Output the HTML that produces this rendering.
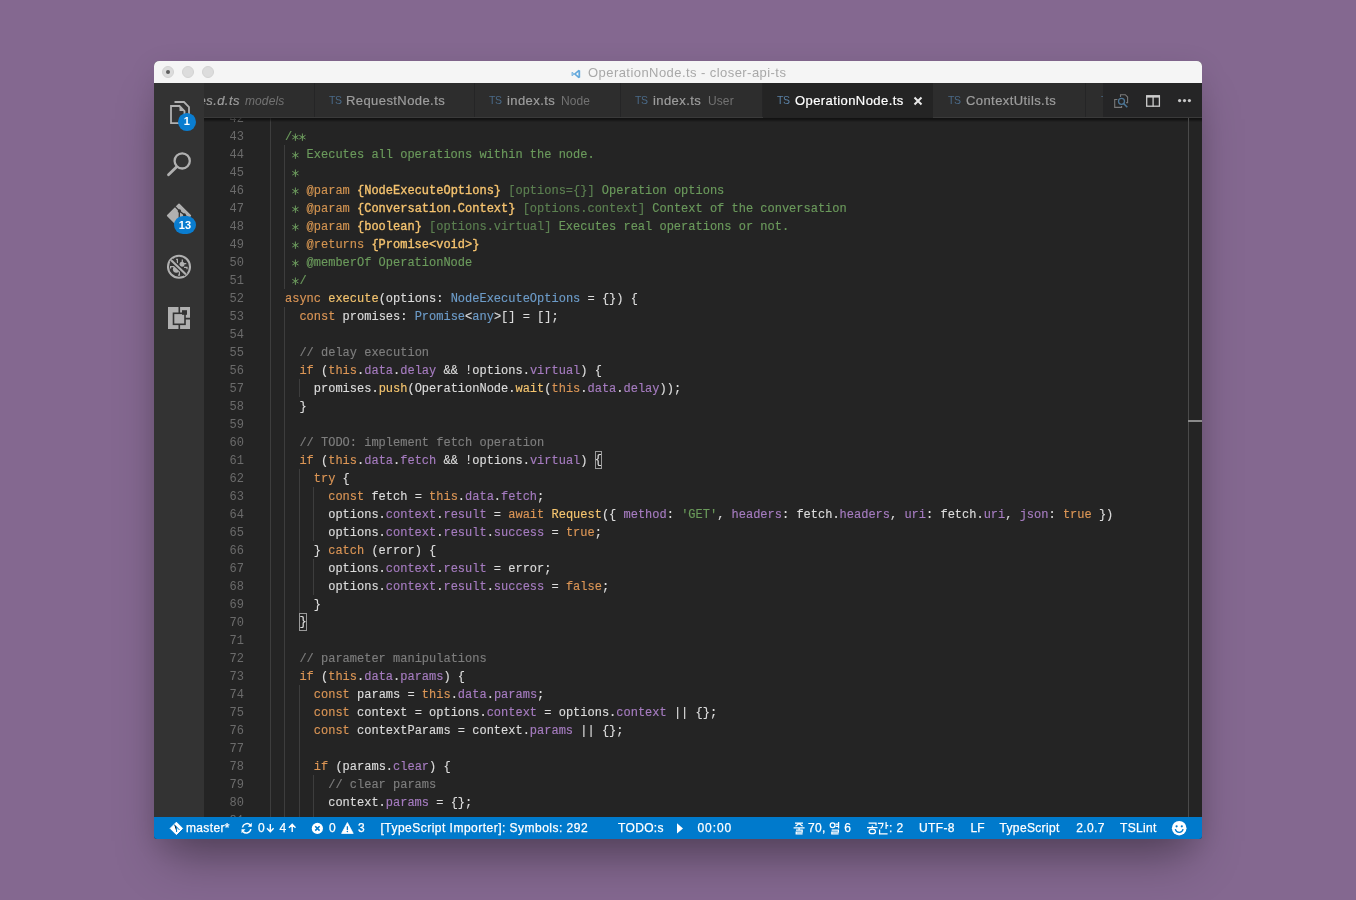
<!DOCTYPE html>
<html><head><meta charset="utf-8">
<style>
*{margin:0;padding:0;box-sizing:border-box}
html,body{width:1356px;height:900px;overflow:hidden;-webkit-font-smoothing:antialiased;background:#846890;font-family:"Liberation Sans",sans-serif}
#win{will-change:transform;position:absolute;left:154px;top:61px;width:1048px;height:778px;border-radius:5px 5px 3px 3px;overflow:hidden;background:#242424;box-shadow:0 30px 45px -12px rgba(0,0,0,0.34),0 8px 30px rgba(0,0,0,0.1)}
#title{position:absolute;left:0;top:0;width:1048px;height:22px;background:#f5f5f5}
.tl{position:absolute;top:5px;width:12px;height:12px;border-radius:50%;background:#dcdcdc;border:0.5px solid #d2d2d2}
#ttext{position:absolute;left:434px;top:4px;font-size:13px;line-height:15px;letter-spacing:0.44px;color:#a8a8a8;white-space:nowrap}
#act{position:absolute;left:0;top:22px;width:50px;height:734px;background:#333333}
#act svg{position:absolute;left:0;top:0}
#tabs{position:absolute;left:50px;top:22px;width:998px;height:35px;background:#252526}
#tabs .bb{position:absolute;left:0;top:34px;width:998px;height:1px;background:#3a3a3a}
.tab{position:absolute;top:0;height:35px;background:#2d2d2d;font-size:13px;line-height:15px;color:#9d9d9d;white-space:nowrap;overflow:hidden}
.tab .sep{position:absolute;right:0;top:0;width:1px;height:35px;background:#252526}
.tab .ts{position:absolute;top:12px;font-size:10.5px;line-height:11px;color:#4a6a88;letter-spacing:-0.4px}
.tab .nm{position:absolute;top:10px;letter-spacing:0.42px;-webkit-text-stroke:0.2px currentColor}
.tab .ds{position:absolute;top:11px;font-size:12px;line-height:14px;color:#737373;letter-spacing:0.1px}
#editor{position:absolute;left:50px;top:57px;width:998px;height:699px;background:#242424;overflow:hidden}
#gutter{position:absolute;left:0;top:0;width:66px;height:699px}
.ln{position:absolute;left:0;width:40px;text-align:right;font-family:"Liberation Mono",monospace;font-size:12px;color:#6b6b6b;line-height:18px;height:18px}
#code{position:absolute;left:66.6px;top:0;width:930px;height:699px}
.l{position:absolute;left:0;height:18px;line-height:18px;font-family:"Liberation Mono",monospace;font-size:12px;color:#dcdcdc;white-space:pre;-webkit-text-stroke:0.15px currentColor}
.g{position:absolute;width:1px;background:#3d3d3d}
#status{position:absolute;left:0;top:756px;width:1048px;height:22px;background:#007acc;color:#fff;font-size:12px;line-height:14px;white-space:nowrap;letter-spacing:0.35px;-webkit-text-stroke:0.25px #fff}
#status span{position:absolute;top:4px}
#status svg{position:absolute;left:0;top:0}
/* syntax */
.k{color:#dc9656}.f{color:#f5c56f}.p{color:#a67cc0}.t{color:#6d9cc9}.c{color:#7e7e7e}.d{color:#6b9a5c}.s{color:#6a9a5a}.tg{color:#d39451}.ty{color:#f5c36f;-webkit-text-stroke:0.35px #f5c36f}.dp{color:#5c8051}
.ast{vertical-align:top;display:inline-block}
.bm{display:inline-block;vertical-align:top;width:7.2px;height:18px;position:relative;top:-1px;box-shadow:inset 0 0 0 1px #9a9a9a}
</style></head><body>
<div id="win">
  <div id="title">
    <div class="tl" style="left:8px"></div>
    <div class="tl" style="left:28px"></div>
    <div class="tl" style="left:48px"></div>
    <div style="position:absolute;left:12px;top:9px;width:4px;height:4px;border-radius:50%;background:#5e5e5e"></div>
    <svg style="position:absolute;left:417px;top:8px" width="10" height="10" viewBox="0 0 10 10"><path d="M7.5,0.8 L9.2,1.6 V8.4 L7.5,9.2 L3.2,5.6 L1.3,7.1 L0.6,6.7 V3.3 L1.3,2.9 L3.2,4.4 Z M7.4,3.1 L5,5 L7.4,6.9 Z M1.6,4.1 V5.9 L2.6,5 Z" fill="#62a8dc" fill-rule="evenodd"/></svg>
    <div id="ttext">OperationNode.ts - closer-api-ts</div>
  </div>
  <div id="act">
    <svg width="50" height="734" viewBox="0 0 50 734">
      <g transform="translate(-154,-83)" fill="none" stroke="#b0b0b0">
        <!-- explorer -->
        <path d="M174.5,102 H184 L189,107 V119" stroke-width="1.8"/>
        <path d="M171,106 H179.5 L184.5,111 V123.2 H171 Z" stroke-width="1.8"/>
        <path d="M179.5,106 V111 H184.5 Z" fill="#b0b0b0" stroke-width="0"/>
        <!-- search -->
        <circle cx="182.2" cy="160.9" r="7.6" stroke-width="2.3"/>
        <path d="M168.5,174.8 L176.5,167" stroke-width="2.8" stroke-linecap="round"/>
        <!-- git -->
        <path d="M179,204.3 L190.3,215.6 L179,226.9 L167.7,215.6 Z" fill="#b0b0b0" stroke="#b0b0b0" stroke-width="1.6" stroke-linejoin="round"/>
        <path d="M175,206.4 L179.4,211 L184.6,215 L188,217.5 M179.4,211 L179.2,220" stroke="#333" stroke-width="1.3"/>
        <circle cx="179.4" cy="211" r="1.7" fill="#333" stroke="none"/>
        <circle cx="184.4" cy="214.8" r="1.5" fill="#333" stroke="none"/>
        <!-- debug -->
        <circle cx="179" cy="266.8" r="11" stroke="#b0b0b0" stroke-width="2.1"/>
        <g fill="#b0b0b0" stroke="none">
          <circle cx="176.3" cy="269.3" r="3.4"/>
          <circle cx="182" cy="264.2" r="2.5"/>
        </g>
        <path d="M170.6,268.6 V266.7 H174.5 M176.1,259.3 H177.4 V263.2 M182.3,259.6 V262 M183.6,263.6 H186.3 M184,267.3 H187 V269.2 M179.4,271 V275.2 H178" stroke="#b0b0b0" stroke-width="1.25"/>
        <path d="M171.2,260.2 L186,274.6" stroke="#333" stroke-width="4.4"/>
        <path d="M171.2,260.2 L186,274.6" stroke="#b0b0b0" stroke-width="2.1"/>
        <!-- extensions -->
        <rect x="168" y="307" width="22" height="22" fill="#b0b0b0" stroke="none"/>
        <path d="M179.3,307 V313 M179.3,324 V329 M185,318.6 H190" stroke="#333" stroke-width="1.6"/>
        <rect x="173.5" y="313.3" width="11.5" height="11" stroke="#333" stroke-width="1.6"/>
        <rect x="182" y="310.2" width="5" height="4.6" fill="#333" stroke="none"/>
      </g>
    </svg>
    <div style="position:absolute;left:24px;top:29.8px;width:17.8px;height:17.8px;border-radius:50%;background:#0a7dd0;color:#fff;font-size:11px;font-weight:bold;line-height:17.8px;text-align:center">1</div>
    <div style="position:absolute;left:20px;top:133px;width:22px;height:18px;border-radius:9px;background:#0a7dd0;color:#fff;font-size:11px;font-weight:bold;line-height:18px;text-align:center;letter-spacing:0.2px">13</div>
  </div>
  <div id="tabs">
    <div class="tab" style="left:0;width:111px"><div class="sep"></div>
      <div class="nm" style="left:-24px;font-style:italic;color:#9d9d9d">types.d.ts</div>
      <div class="ds" style="left:41px;font-style:italic">models</div>
    </div>
    <div class="tab" style="left:111px;width:160px"><div class="sep"></div>
      <div class="ts" style="left:14px">TS</div>
      <div class="nm" style="left:31px">RequestNode.ts</div>
    </div>
    <div class="tab" style="left:271px;width:146px"><div class="sep"></div>
      <div class="ts" style="left:14px">TS</div>
      <div class="nm" style="left:32px">index.ts</div>
      <div class="ds" style="left:86px">Node</div>
    </div>
    <div class="tab" style="left:417px;width:142px"><div class="sep"></div>
      <div class="ts" style="left:14px">TS</div>
      <div class="nm" style="left:32px">index.ts</div>
      <div class="ds" style="left:87px">User</div>
    </div>
    <div class="tab" style="left:559px;width:170px;background:#242424;color:#ffffff;height:35px">
      <div class="ts" style="left:14px;color:#5a80a5">TS</div>
      <div class="nm" style="left:32px">OperationNode.ts</div>
      <svg style="position:absolute;left:150px;top:13px" width="10" height="10" viewBox="0 0 10 10"><path d="M1.5,1.5 L8.5,8.5 M8.5,1.5 L1.5,8.5" stroke="#e8e8e8" stroke-width="2"/></svg>
    </div>
    <div class="tab" style="left:729px;width:153px"><div class="sep"></div>
      <div class="ts" style="left:15px">TS</div>
      <div class="nm" style="left:33px">ContextUtils.ts</div>
    </div>
    <div class="tab" style="left:882px;width:17px">
      <div class="ts" style="left:15px">TS</div>
    </div>
    <div class="bb" style="left:0;width:559px"></div>
    <div class="bb" style="left:729px;width:269px"></div>
    <svg style="position:absolute;left:899px;top:0" width="99" height="35" viewBox="1103 83 99 35">
      <path d="M1120.5,97 V94.7 H1125.3 L1127.6,97 V102.6 H1126.2 M1117.4,99.5 H1114.7 V107.4 H1121.6 V106" fill="none" stroke="#7a7a7a" stroke-width="1.1"/>
      <circle cx="1121.5" cy="101.3" r="3" fill="none" stroke="#4d7696" stroke-width="1.3"/>
      <path d="M1123.6,103.5 L1127.3,107.3" stroke="#4d7696" stroke-width="1.6"/>
      <rect x="1146.7" y="96" width="12.7" height="10.2" fill="none" stroke="#cccccc" stroke-width="1.3"/>
      <rect x="1146.1" y="95.2" width="13.9" height="2.4" fill="#cccccc"/>
      <path d="M1153.1,96 V106.5" stroke="#cccccc" stroke-width="1.3"/>
      <circle cx="1179.6" cy="100.6" r="1.6" fill="#c8c8c8"/>
      <circle cx="1184.5" cy="100.6" r="1.6" fill="#c8c8c8"/>
      <circle cx="1189.4" cy="100.6" r="1.6" fill="#c8c8c8"/>
    </svg>
  </div>
  <div id="editor">
    <div id="gutter"><div class="ln" style="top:-8px">42</div>
<div class="ln" style="top:10px">43</div>
<div class="ln" style="top:28px">44</div>
<div class="ln" style="top:46px">45</div>
<div class="ln" style="top:64px">46</div>
<div class="ln" style="top:82px">47</div>
<div class="ln" style="top:100px">48</div>
<div class="ln" style="top:118px">49</div>
<div class="ln" style="top:136px">50</div>
<div class="ln" style="top:154px">51</div>
<div class="ln" style="top:172px">52</div>
<div class="ln" style="top:190px">53</div>
<div class="ln" style="top:208px">54</div>
<div class="ln" style="top:226px">55</div>
<div class="ln" style="top:244px">56</div>
<div class="ln" style="top:262px">57</div>
<div class="ln" style="top:280px">58</div>
<div class="ln" style="top:298px">59</div>
<div class="ln" style="top:316px">60</div>
<div class="ln" style="top:334px">61</div>
<div class="ln" style="top:352px">62</div>
<div class="ln" style="top:370px">63</div>
<div class="ln" style="top:388px">64</div>
<div class="ln" style="top:406px">65</div>
<div class="ln" style="top:424px">66</div>
<div class="ln" style="top:442px">67</div>
<div class="ln" style="top:460px">68</div>
<div class="ln" style="top:478px">69</div>
<div class="ln" style="top:496px">70</div>
<div class="ln" style="top:514px">71</div>
<div class="ln" style="top:532px">72</div>
<div class="ln" style="top:550px">73</div>
<div class="ln" style="top:568px">74</div>
<div class="ln" style="top:586px">75</div>
<div class="ln" style="top:604px">76</div>
<div class="ln" style="top:622px">77</div>
<div class="ln" style="top:640px">78</div>
<div class="ln" style="top:658px">79</div>
<div class="ln" style="top:676px">80</div>
<div class="ln" style="top:694px">81</div></div>
    <div id="code"><div class="l" style="top:-8px"></div>
<div class="l" style="top:10px">  <span class="d">/<svg class="ast" width="7.2" height="18" viewBox="0 0 7.2 18"><path d="M3.4,5.5 V12.9 M0.3,7.35 L6.5,11.05 M0.3,11.05 L6.5,7.35" stroke="currentColor" stroke-width="1"/></svg><svg class="ast" width="7.2" height="18" viewBox="0 0 7.2 18"><path d="M3.4,5.5 V12.9 M0.3,7.35 L6.5,11.05 M0.3,11.05 L6.5,7.35" stroke="currentColor" stroke-width="1"/></svg></span></div>
<div class="l" style="top:28px">  <span class="d"> <svg class="ast" width="7.2" height="18" viewBox="0 0 7.2 18"><path d="M3.4,5.5 V12.9 M0.3,7.35 L6.5,11.05 M0.3,11.05 L6.5,7.35" stroke="currentColor" stroke-width="1"/></svg> Executes all operations within the node.</span></div>
<div class="l" style="top:46px">  <span class="d"> <svg class="ast" width="7.2" height="18" viewBox="0 0 7.2 18"><path d="M3.4,5.5 V12.9 M0.3,7.35 L6.5,11.05 M0.3,11.05 L6.5,7.35" stroke="currentColor" stroke-width="1"/></svg></span></div>
<div class="l" style="top:64px">  <span class="d"> <svg class="ast" width="7.2" height="18" viewBox="0 0 7.2 18"><path d="M3.4,5.5 V12.9 M0.3,7.35 L6.5,11.05 M0.3,11.05 L6.5,7.35" stroke="currentColor" stroke-width="1"/></svg> </span><span class="tg">@param</span><span class="d"> </span><span class="ty">{NodeExecuteOptions}</span><span class="d"> </span><span class="dp">[options={}]</span><span class="d"> Operation options</span></div>
<div class="l" style="top:82px">  <span class="d"> <svg class="ast" width="7.2" height="18" viewBox="0 0 7.2 18"><path d="M3.4,5.5 V12.9 M0.3,7.35 L6.5,11.05 M0.3,11.05 L6.5,7.35" stroke="currentColor" stroke-width="1"/></svg> </span><span class="tg">@param</span><span class="d"> </span><span class="ty">{Conversation.Context}</span><span class="d"> </span><span class="dp">[options.context]</span><span class="d"> Context of the conversation</span></div>
<div class="l" style="top:100px">  <span class="d"> <svg class="ast" width="7.2" height="18" viewBox="0 0 7.2 18"><path d="M3.4,5.5 V12.9 M0.3,7.35 L6.5,11.05 M0.3,11.05 L6.5,7.35" stroke="currentColor" stroke-width="1"/></svg> </span><span class="tg">@param</span><span class="d"> </span><span class="ty">{boolean}</span><span class="d"> </span><span class="dp">[options.virtual]</span><span class="d"> Executes real operations or not.</span></div>
<div class="l" style="top:118px">  <span class="d"> <svg class="ast" width="7.2" height="18" viewBox="0 0 7.2 18"><path d="M3.4,5.5 V12.9 M0.3,7.35 L6.5,11.05 M0.3,11.05 L6.5,7.35" stroke="currentColor" stroke-width="1"/></svg> </span><span class="tg">@returns</span><span class="d"> </span><span class="ty">{Promise&lt;void&gt;}</span></div>
<div class="l" style="top:136px">  <span class="d"> <svg class="ast" width="7.2" height="18" viewBox="0 0 7.2 18"><path d="M3.4,5.5 V12.9 M0.3,7.35 L6.5,11.05 M0.3,11.05 L6.5,7.35" stroke="currentColor" stroke-width="1"/></svg> @memberOf OperationNode</span></div>
<div class="l" style="top:154px">  <span class="d"> <svg class="ast" width="7.2" height="18" viewBox="0 0 7.2 18"><path d="M3.4,5.5 V12.9 M0.3,7.35 L6.5,11.05 M0.3,11.05 L6.5,7.35" stroke="currentColor" stroke-width="1"/></svg>/</span></div>
<div class="l" style="top:172px">  <span class="k">async</span> <span class="f">execute</span>(options: <span class="t">NodeExecuteOptions</span> = {}) {</div>
<div class="l" style="top:190px">    <span class="k">const</span> promises: <span class="t">Promise</span>&lt;<span class="t">any</span>&gt;[] = [];</div>
<div class="l" style="top:208px"></div>
<div class="l" style="top:226px">    <span class="c">// delay execution</span></div>
<div class="l" style="top:244px">    <span class="k">if</span> (<span class="k">this</span>.<span class="p">data</span>.<span class="p">delay</span> &amp;&amp; !options.<span class="p">virtual</span>) {</div>
<div class="l" style="top:262px">      promises.<span class="f">push</span>(OperationNode.<span class="f">wait</span>(<span class="k">this</span>.<span class="p">data</span>.<span class="p">delay</span>));</div>
<div class="l" style="top:280px">    }</div>
<div class="l" style="top:298px"></div>
<div class="l" style="top:316px">    <span class="c">// TODO: implement fetch operation</span></div>
<div class="l" style="top:334px">    <span class="k">if</span> (<span class="k">this</span>.<span class="p">data</span>.<span class="p">fetch</span> &amp;&amp; !options.<span class="p">virtual</span>) <span class="bm">{</span></div>
<div class="l" style="top:352px">      <span class="k">try</span> {</div>
<div class="l" style="top:370px">        <span class="k">const</span> fetch = <span class="k">this</span>.<span class="p">data</span>.<span class="p">fetch</span>;</div>
<div class="l" style="top:388px">        options.<span class="p">context</span>.<span class="p">result</span> = <span class="k">await</span> <span class="f">Request</span>({ <span class="p">method</span>: <span class="s">&#x27;GET&#x27;</span>, <span class="p">headers</span>: fetch.<span class="p">headers</span>, <span class="p">uri</span>: fetch.<span class="p">uri</span>, <span class="p">json</span>: <span class="k">true</span> })</div>
<div class="l" style="top:406px">        options.<span class="p">context</span>.<span class="p">result</span>.<span class="p">success</span> = <span class="k">true</span>;</div>
<div class="l" style="top:424px">      } <span class="k">catch</span> (error) {</div>
<div class="l" style="top:442px">        options.<span class="p">context</span>.<span class="p">result</span> = error;</div>
<div class="l" style="top:460px">        options.<span class="p">context</span>.<span class="p">result</span>.<span class="p">success</span> = <span class="k">false</span>;</div>
<div class="l" style="top:478px">      }</div>
<div class="l" style="top:496px">    <span class="bm">}</span></div>
<div class="l" style="top:514px"></div>
<div class="l" style="top:532px">    <span class="c">// parameter manipulations</span></div>
<div class="l" style="top:550px">    <span class="k">if</span> (<span class="k">this</span>.<span class="p">data</span>.<span class="p">params</span>) {</div>
<div class="l" style="top:568px">      <span class="k">const</span> params = <span class="k">this</span>.<span class="p">data</span>.<span class="p">params</span>;</div>
<div class="l" style="top:586px">      <span class="k">const</span> context = options.<span class="p">context</span> = options.<span class="p">context</span> || {};</div>
<div class="l" style="top:604px">      <span class="k">const</span> contextParams = context.<span class="p">params</span> || {};</div>
<div class="l" style="top:622px"></div>
<div class="l" style="top:640px">      <span class="k">if</span> (params.<span class="p">clear</span>) {</div>
<div class="l" style="top:658px">        <span class="c">// clear params</span></div>
<div class="l" style="top:676px">        context.<span class="p">params</span> = {};</div>
<div class="l" style="top:694px"></div>
<div class="g" style="left:-0.6px;top:-9px;height:720px"></div>
<div class="g" style="left:13.8px;top:27px;height:144px"></div>
<div class="g" style="left:13.8px;top:189px;height:522px"></div>
<div class="g" style="left:28.2px;top:261px;height:18px"></div>
<div class="g" style="left:28.2px;top:351px;height:144px"></div>
<div class="g" style="left:28.2px;top:567px;height:144px"></div>
<div class="g" style="left:42.6px;top:369px;height:54px"></div>
<div class="g" style="left:42.6px;top:441px;height:36px"></div>
<div class="g" style="left:42.6px;top:657px;height:54px"></div></div>
    <div style="position:absolute;left:0;top:0;width:998px;height:4px;background:linear-gradient(rgba(0,0,0,0.55),rgba(0,0,0,0.35) 50%,rgba(0,0,0,0))"></div>
    <div style="position:absolute;left:984px;top:0;width:1px;height:699px;background:#4a4a4a"></div>
    <div style="position:absolute;left:984px;top:302px;width:14px;height:2px;background:#8a8a8a"></div>
  </div>
  <div id="status">
    <svg width="1048" height="22" viewBox="154 817 1048 22">
      <path d="M176.4,822.2 L182.6,828.4 L176.4,834.6 L170.2,828.4 Z" fill="#fff" stroke="#fff" stroke-width="1" stroke-linejoin="round"/>
      <path d="M174.2,824.5 L176.6,827 V832 M176.6,827 L179.5,830" stroke="#007acc" stroke-width="1"/>
      <path d="M242.5,827.5 A4.6,4.6 0 0 1 250.3,825 M250.8,829 A4.6,4.6 0 0 1 243,831.6" fill="none" stroke="#fff" stroke-width="1.5"/>
      <path d="M251.8,822.8 V826.8 H247.8 Z M241.5,833.2 V829.2 H245.5 Z" fill="#fff"/>
      <circle cx="317.4" cy="828.4" r="5.6" fill="#fff"/>
      <path d="M315.2,826.2 L319.6,830.6 M319.6,826.2 L315.2,830.6" stroke="#007acc" stroke-width="1.6"/>
      <path d="M347.4,822.6 L353.2,833.4 H341.6 Z" fill="#fff" stroke="#fff" stroke-width="0.8" stroke-linejoin="round"/>
      <path d="M347.4,826.2 V830" stroke="#007acc" stroke-width="1.3"/>
      <circle cx="347.4" cy="831.6" r="0.75" fill="#007acc"/>
      <path d="M270.3,824 V831.5 M267,828.3 L270.3,831.8 L273.6,828.3 M292.2,832 V824.5 M288.9,827.7 L292.2,824.2 L295.5,827.7" fill="none" stroke="#fff" stroke-width="1.4"/>
      <path d="M677,823.2 L683,828.4 L677,833.6 Z" fill="#fff"/>
      <g fill="none" stroke="#fff" stroke-width="1.25">
        <path d="M795,823 H803 M799,823.6 L795.6,826.2 M799,823.6 L802.6,826.2 M793.6,827.8 H804.6 M799.1,827.8 V829.4 M796,830 H802.2 V832 H796.2 V833.9 H802.6"/>
        <circle cx="832.6" cy="825.2" r="2.4"/>
        <path d="M838.6,822 V828.6 M835.6,824.1 H838.6 M835.6,826.4 H838.6 M831.6,830 H838.4 V832 H831.8 V833.9 H838.6"/>
        <path d="M868.6,823.1 H876 V825.6 M872.3,825.6 V827.3 M867,827.6 H877.6"/>
        <ellipse cx="872.3" cy="831.4" rx="3.2" ry="2.3"/>
        <path d="M877.9,823.3 H883 Q882.8,826.6 880.6,828.6 M886.1,822 V829 M886.1,825.5 H888.3 M879.6,829.6 V833.8 H887.6"/>
      </g>
      <circle cx="1179.2" cy="828.2" r="7.3" fill="#fff"/>
      <circle cx="1176.6" cy="826.3" r="1.1" fill="#007acc"/>
      <circle cx="1181.8" cy="826.3" r="1.1" fill="#007acc"/>
      <path d="M1175.3,829.2 A4,4 0 0 0 1183.1,829.2" fill="none" stroke="#007acc" stroke-width="1.3"/>
    </svg>
    <span style="left:32px">master*</span>
    <span style="left:104px">0</span><span style="left:125.5px">4</span>
    <span style="left:175px">0</span>
    <span style="left:204px">3</span>
    <span style="left:226.5px;letter-spacing:0.48px">[TypeScript Importer]: Symbols: 292</span>
    <span style="left:464px">TODO:s</span>
    <span style="left:543.5px;letter-spacing:0.9px">00:00</span>
    <span style="left:654px">70,</span><span style="left:690.2px">6</span>
    <span style="left:735px">:</span><span style="left:742.6px">2</span>
    <span style="left:765px">UTF-8</span>
    <span style="left:816.5px;letter-spacing:0px">LF</span>
    <span style="left:845.5px">TypeScript</span>
    <span style="left:922.3px">2.0.7</span>
    <span style="left:966px">TSLint</span>
  </div>
</div>
</body></html>
